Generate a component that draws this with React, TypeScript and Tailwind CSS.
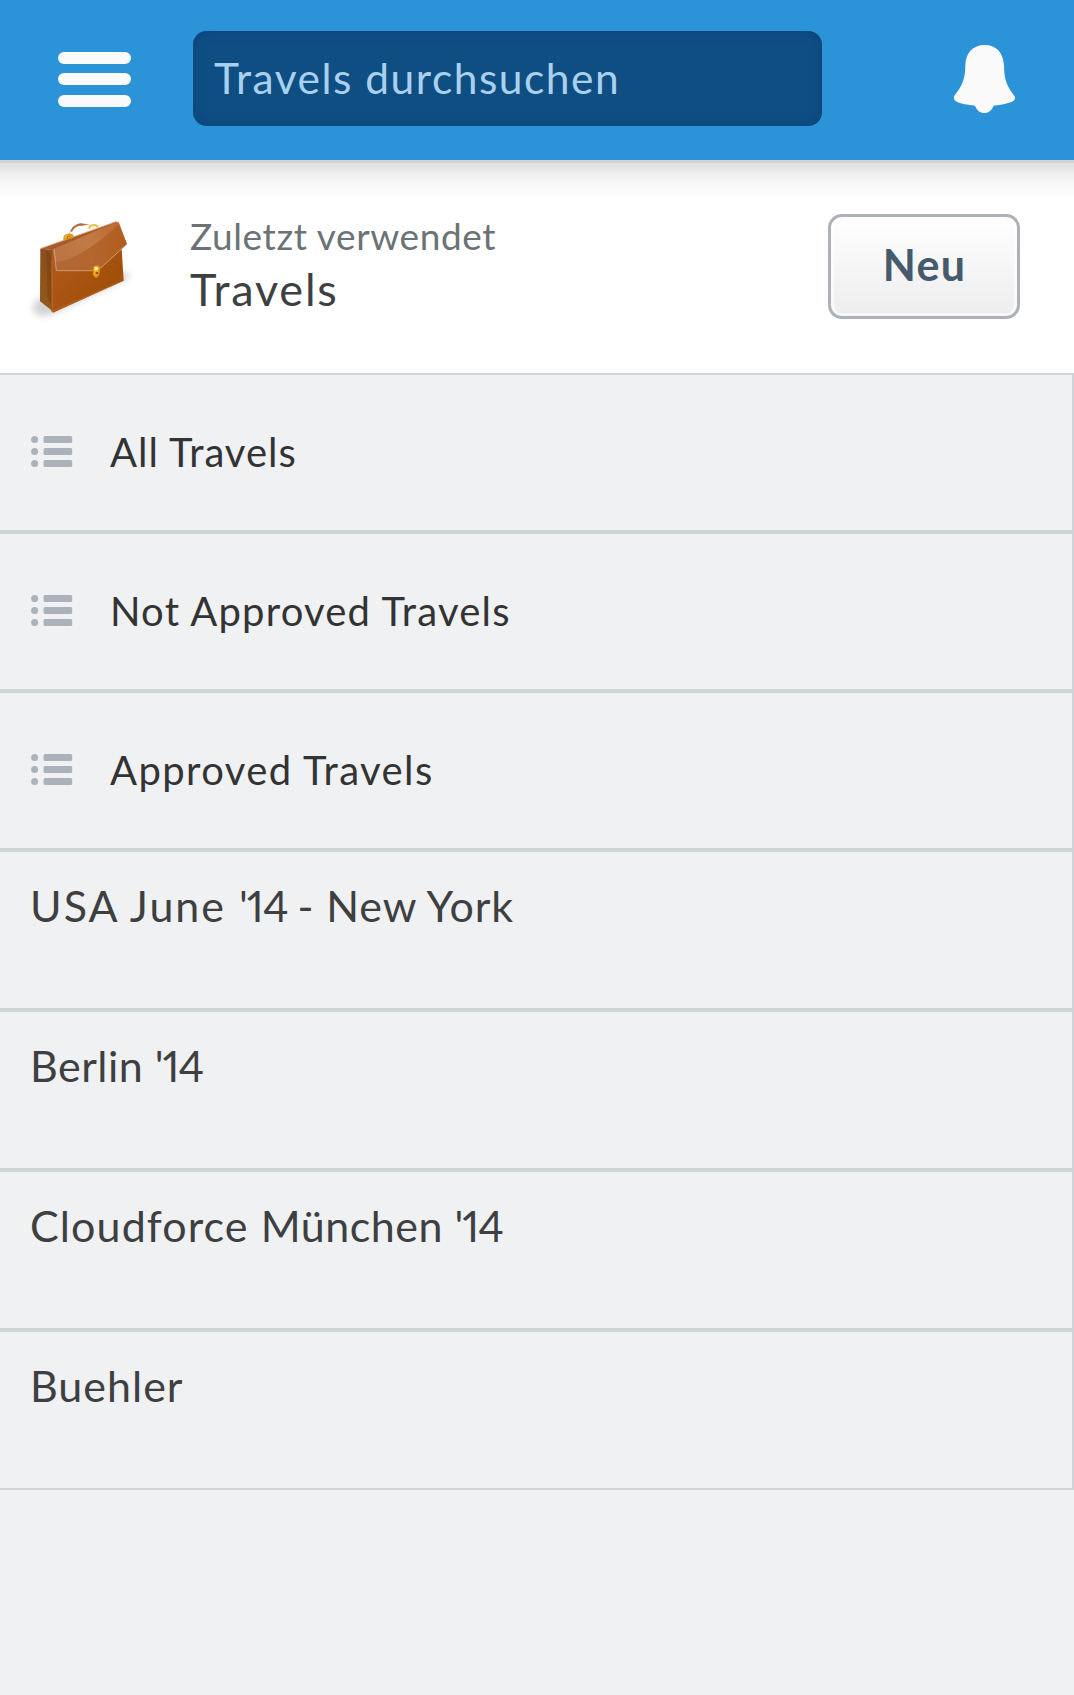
import React from "react";

const listViews = [
  { label: "All Travels", tracking: "tracking-[1px]" },
  { label: "Not Approved Travels", tracking: "tracking-[1.2px]" },
  { label: "Approved Travels", tracking: "tracking-[1.4px]" },
];

const records = [
  [
    { text: "USA June ", tracking: "tracking-[2px]" },
    { text: "'14 ", tracking: "tracking-[-1px]" },
    { text: "- New York", tracking: "tracking-[0.85px]" },
  ],
  [
    { text: "Berlin ", tracking: "tracking-[0.5px]" },
    { text: "'14", tracking: "tracking-[-1px]" },
  ],
  [
    { text: "Cloudforce ", tracking: "tracking-[1.1px]" },
    { text: "München ", tracking: "tracking-[0.5px]" },
    { text: "'14", tracking: "tracking-[-1px]" },
  ],
  [{ text: "Buehler", tracking: "tracking-[1px]" }],
];

function BellIcon() {
  return (
    <svg width="62" height="69" viewBox="0 0 186 207" fill="#fafafa" aria-hidden="true">
      <path d="M92 0C56 0 35 24 34 61C34 100 25 123 2 151C-2 157 -1 164 6 169C19 177 41 180 63 182C68 195 78 204 91 204C104 204 114 195 119 182C142 180 165 175 177 169C184 164 185 157 181 152C158 125 150 100 150 61C148 24 128 0 92 0Z" />
    </svg>
  );
}

function ListIcon() {
  return (
    <svg className="relative -top-px" width="42" height="32" viewBox="0 0 42 32" fill="#acb2b9" aria-hidden="true">
      <circle cx="3.6" cy="3.5" r="3.5" />
      <circle cx="3.6" cy="15.5" r="3.5" />
      <circle cx="3.6" cy="27.5" r="3.5" />
      <rect x="12.6" y="0" width="28.6" height="7" rx="1.6" />
      <rect x="12.6" y="12" width="28.6" height="7" rx="1.6" />
      <rect x="12.6" y="24" width="28.6" height="7" rx="1.6" />
    </svg>
  );
}

function BriefcaseIcon() {
  return (
    <svg width="130" height="130" viewBox="0 0 390 390" aria-hidden="true">
      <defs>
        <linearGradient id="front" x1="0" y1="0.2" x2="0.8" y2="1">
          <stop offset="0" stopColor="#ac5a1e" />
          <stop offset="0.5" stopColor="#a85410" />
          <stop offset="1" stopColor="#9f4b09" />
        </linearGradient>
        <linearGradient id="flap" x1="0" y1="0.5" x2="1" y2="0.4">
          <stop offset="0" stopColor="#b97444" />
          <stop offset="0.5" stopColor="#c27b45" />
          <stop offset="1" stopColor="#bb662c" />
        </linearGradient>
        <linearGradient id="lower" x1="0" y1="0" x2="1" y2="0">
          <stop offset="0" stopColor="#ad6430" />
          <stop offset="1" stopColor="#ad5818" />
        </linearGradient>
        <linearGradient id="side" x1="0" y1="0" x2="0" y2="1">
          <stop offset="0" stopColor="#8a4d1f" />
          <stop offset="1" stopColor="#945a17" />
        </linearGradient>
        <linearGradient id="gold" x1="0" y1="0" x2="1" y2="1">
          <stop offset="0" stopColor="#ffe15c" />
          <stop offset="0.5" stopColor="#efaa18" />
          <stop offset="1" stopColor="#c97f0a" />
        </linearGradient>
        <filter id="soft" x="-20%" y="-20%" width="140%" height="140%">
          <feGaussianBlur stdDeviation="9" />
        </filter>
        <filter id="edge" x="-5%" y="-5%" width="110%" height="110%" colorInterpolationFilters="sRGB">
          <feGaussianBlur stdDeviation="1.8" />
        </filter>
      </defs>
      <path d="M48 300L36 330L62 350L98 342L318 240L332 226L305 215Z" fill="#888" opacity="0.36" filter="url(#soft)" />
      <g filter="url(#edge)">
        <path d="M148 104C151 82 166 72 184 71L207 74C217 77 222 82 222 87" fill="none" stroke="#e8d2c4" strokeWidth="3" />
        <path d="M151 94C157 80 168 72 181 70L206 74L185 77C172 77 162 82 156 96Z" fill="#b9673a" />
        <path d="M61 146L103 150L102 337L60 304Z" fill="url(#side)" />
        <path d="M80 152L94 170L96 318L82 296Z" fill="#743509" opacity="0.35" />
        <path d="M95 150L302 100L311 242L99 338L93 332Z" fill="url(#front)" />
        <path d="M96 180L98 333L310 242L308 228" fill="none" stroke="#c9753a" strokeWidth="2" opacity="0.75" />
        <path d="M61 146L288 65L297 68L103 151Z" fill="#a9592c" />
        <path d="M98 148L291 66L297 68L321 132L233 212L109 213Z" fill="url(#flap)" />
        <path d="M104 187C170 180 235 128 295 75L321 132L233 212L109 213Z" fill="url(#lower)" opacity="0.7" />
        <path d="M61 146L288 65L296 68M103 148L109 212L233 212L321 132" fill="none" stroke="#d9a079" strokeWidth="2.6" />
        <path d="M132 119L133 109C138 102 150 101 158 105L159 112Z" fill="url(#gold)" stroke="#dd9b1a" strokeWidth="4" />
        <path d="M142 117V109L152 108" fill="none" stroke="#8b4a10" strokeWidth="2" />
        <path d="M207 86L210 79C217 74 226 74 232 78L231 83" fill="none" stroke="#f2bd3a" strokeWidth="6" />
        <path d="M221 202L225 198H236L239 204L236 227L228 233L220 224Z" fill="url(#gold)" stroke="#dd9212" strokeWidth="3" />
        <circle cx="229" cy="206" r="5" fill="#fff4bd" />
        <path d="M227 219H234" stroke="#7a430a" strokeWidth="5" />
      </g>
    </svg>
  );
}

export default function App() {
  return (
    <div className="flex h-[1695px] w-[1074px] flex-col overflow-hidden bg-[#eff1f3] font-['Lato',sans-serif]">
      <header className="flex h-40 shrink-0 items-start bg-[#2b93d7]">
        <button aria-label="Menü" className="mt-[52px] ml-[58px] flex w-[73px] flex-col">
          <span className="h-3 w-full rounded-full bg-[#fafafa]" />
          <span className="mt-[9px] h-3 w-full rounded-full bg-[#fafafa]" />
          <span className="mt-[10px] h-3 w-full rounded-full bg-[#fafafa]" />
        </button>
        <div className="mt-[31px] ml-[62px] flex h-[95px] w-[629px] items-center rounded-[14px] bg-[#0f4e83] pb-[2px] pl-[21px] shadow-[inset_0_0_12px_#0c427a]">
          <span className="text-[42.5px] leading-[60px] tracking-[1.5px] whitespace-nowrap text-[#a9d0ec]">Travels durchsuchen</span>
        </div>
        <button aria-label="Benachrichtigungen" className="mt-[45px] ml-[132px]">
          <BellIcon />
        </button>
      </header>

      <section className="flex h-[213px] shrink-0 items-start border-t-[3px] border-[#d3d3d3] bg-white bg-[linear-gradient(to_bottom,#dedede_0px,#ececec_9px,#f8f8f8_21px,#ffffff_36px)]">
        <div className="mt-[37px] ml-5">
          <BriefcaseIcon />
        </div>
        <div className="mt-12 ml-10 flex w-[638px] flex-col items-start whitespace-nowrap">
          <span className="text-[37px] leading-[50px] tracking-[0.6px] text-[#6b7376]">Zuletzt verwendet</span>
          <h1 className="text-[45px] leading-[56px] tracking-[1.8px] text-[#3e3f41]">Travels</h1>
        </div>
        <button className="mt-[51px] flex h-[105px] w-48 items-center justify-center rounded-[14px] border-[3px] border-[#acb2b8] bg-linear-to-b from-white to-[#ededed] pb-[2px] pl-px text-[43px] font-bold tracking-[1.2px] text-[#465a6d] shadow-[inset_0_0_0_3px_rgba(255,255,255,0.6)]">
          Neu
        </button>
      </section>

      <main className="flex shrink-0 flex-col border-r-2 border-[#cfd4d9]">
        {listViews.map((v) => (
          <div key={v.label} className="flex h-[159px] items-center border-y-2 border-[#ced5d9] pl-[31px]">
            <ListIcon />
            <span className={`mb-px ml-[37px] text-[40px] leading-[56px] whitespace-nowrap text-[#333333] ${v.tracking}`}>{v.label}</span>
          </div>
        ))}
        {records.map((parts) => (
          <div key={parts[0].text} className="flex h-40 items-start border-y-2 border-[#ced5d9] pt-[23px] pl-[30px]">
            <p className="text-[43px] leading-[61px] whitespace-pre proportional-nums text-[#3e3f41]">
              {parts.map((p) => (
                <span key={p.text} className={p.tracking}>{p.text}</span>
              ))}
            </p>
          </div>
        ))}
      </main>
    </div>
  );
}
